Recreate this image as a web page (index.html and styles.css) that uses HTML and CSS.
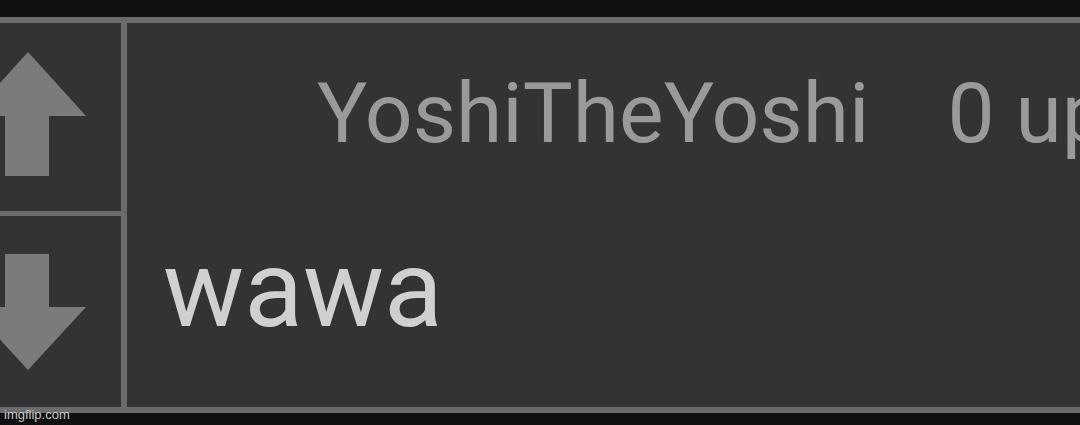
FILE: index.html
```html
<!DOCTYPE html>
<html lang="en">
<head>
  <meta charset="UTF-8">
  <title>Comment</title>
  <link rel="stylesheet" href="styles.css">
</head>
<body>
  <div class="comment">
    <div class="votes">
      <div class="vote up">
        <svg class="arrow" width="121" height="188" viewBox="0 0 121 188">
          <polygon points="28,29 86,93 49,93 49,153 5,153 5,93 -30,93"/>
        </svg>
      </div>
      <div class="vote down">
        <svg class="arrow" width="121" height="191" viewBox="0 0 121 191">
          <polygon points="5,38 49,38 49,91 86,91 28,154 -30,91 5,91"/>
        </svg>
      </div>
    </div>
    <div class="body">
      <div class="meta">
        <span class="user">YoshiTheYoshi</span>
        <span class="points">0 up</span>
      </div>
      <div class="text">wawa</div>
    </div>
  </div>
  <div class="watermark">imgflip.com</div>
</body>
</html>
```

FILE: styles.css
```css
* { box-sizing: border-box; }

html, body {
  margin: 0;
  height: 100%;
  overflow: hidden;
}

body {
  background: #111;
  padding-top: 17px;
  font-family: Roboto, "Noto Sans", sans-serif;
  position: relative;
}

.comment {
  display: flex;
  width: 1080px;
  height: 396px;
  background: #333;
  border-top: 6px solid #6b6b6b;
  border-bottom: 6px solid #6b6b6b;
  overflow: hidden;
}

.votes {
  width: 127px;
  flex: none;
  display: flex;
  flex-direction: column;
  border-right: 6px solid #6b6b6b;
}

.vote {
  height: 188px;
}

.vote.down {
  height: 196px;
  border-top: 5px solid #6b6b6b;
}

.arrow {
  display: block;
  overflow: visible;
}

.arrow polygon {
  fill: #7b7b7b;
}

.body {
  flex: 1;
  min-width: 0;
  padding: 49px 0 0 36px;
}

.meta {
  display: flex;
  gap: 78px;
  padding-left: 154px;
  font-size: 84px;
  line-height: 1;
  color: #9a9a9a;
  white-space: nowrap;
}

.text {
  margin-top: 79px;
  font-size: 108px;
  line-height: 1;
  color: #d0d0d0;
}

.watermark {
  position: absolute;
  left: 4px;
  bottom: 3px;
  font-family: "Liberation Sans", Arial, sans-serif;
  font-size: 13px;
  color: #c8c8c8;
}
```
